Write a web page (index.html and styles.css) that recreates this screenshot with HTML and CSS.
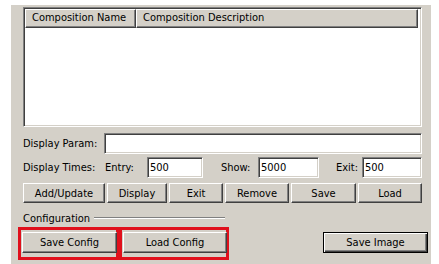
FILE: index.html
```html
<!DOCTYPE html>
<html lang="en">
<head>
    <meta charset="UTF-8">
    <title>Composition Editor</title>
    <link rel="stylesheet" href="styles.css">
</head>
<body>
    <div class="panel">
        <div class="list-view">
            <div class="list-head">
                <div class="head-cell col-name">Composition Name</div>
                <div class="head-cell col-desc">Composition Description</div>
            </div>
            <div class="list-body"></div>
        </div>

        <div class="form-row param-row">
            <span class="row-label param-label">Display Param:</span>
            <input class="field field-wide" type="text" value="">
        </div>

        <div class="form-row times-row">
            <span class="row-label times-label">Display Times:</span>
            <span class="sub-label entry-label">Entry:</span>
            <input class="field field-entry" type="text" value="500">
            <span class="sub-label show-label">Show:</span>
            <input class="field field-show" type="text" value="5000">
            <span class="sub-label exit-label">Exit:</span>
            <input class="field field-exit" type="text" value="500">
        </div>

        <div class="form-row button-row">
            <button class="win-button btn-add">Add/Update</button>
            <button class="win-button btn-display">Display</button>
            <button class="win-button btn-exit">Exit</button>
            <button class="win-button btn-remove">Remove</button>
            <button class="win-button btn-save">Save</button>
            <button class="win-button btn-load">Load</button>
        </div>

        <div class="config-group">
            <div class="group-title">
                <span>Configuration</span>
                <span class="group-line"></span>
            </div>
            <div class="config-row">
                <div class="highlight save-mark">
                    <button class="win-button btn-save-config">Save Config</button>
                </div>
                <div class="highlight load-mark">
                    <button class="win-button btn-load-config">Load Config</button>
                </div>
                <button class="win-button default-button btn-save-image">Save Image</button>
            </div>
        </div>
    </div>
</body>
</html>
```

FILE: styles.css
```css
body {
    margin: 0;
    padding: 0;
    background-color: #ffffff;
    font-family: "DejaVu Sans Condensed", "DejaVu Sans", sans-serif;
    font-size: 11px;
    color: #000000;
}
.panel {
    margin: 5px 0 0 11px;
    width: 420px;
    height: 259px;
    box-sizing: border-box;
    padding: 2px 9px 0 12px;
    background-color: #d4d0c8;
}

/* list view */
.list-view {
    height: 120px;
    box-sizing: border-box;
    border: 1px solid;
    border-color: #808080 #ffffff #ffffff #808080;
    box-shadow: inset 1px 1px #404040, inset -1px -1px #d4d0c8;
    background-color: #ffffff;
    padding: 1px;
    display: flex;
    flex-direction: column;
}
.list-head {
    display: flex;
    height: 19px;
    margin-right: 2px;
}
.head-cell {
    box-sizing: border-box;
    height: 19px;
    line-height: 16px;
    padding-left: 6px;
    background-color: #d4d0c8;
    border: 1px solid;
    border-color: #ffffff #404040 #404040 #ffffff;
    box-shadow: inset -1px -1px #808080;
    white-space: nowrap;
}
.col-name {
    width: 111px;
}
.col-desc {
    flex: 1;
}
.list-body {
    flex: 1;
}

/* form rows */
.form-row {
    display: flex;
    align-items: center;
}
.param-row {
    margin-top: 6px;
}
.times-row {
    margin-top: 3px;
}
.button-row {
    margin-top: 5px;
    gap: 2px;
}
.row-label {
    white-space: nowrap;
}
.param-label {
    width: 81px;
}
.times-label {
    width: 82px;
}
.sub-label {
    box-sizing: border-box;
    white-space: nowrap;
}
.entry-label {
    width: 42px;
}
.show-label {
    width: 55px;
    padding-left: 18px;
}
.exit-label {
    width: 43px;
    padding-left: 17px;
}
.field {
    box-sizing: border-box;
    height: 21px;
    margin: 0;
    padding: 0 2px;
    font: inherit;
    color: #000000;
    background-color: #ffffff;
    border: 1px solid;
    border-color: #808080 #ffffff #ffffff #808080;
    box-shadow: inset 1px 1px #404040, inset -1px -1px #d4d0c8;
    outline: none;
}
.field-wide {
    flex: 1;
    min-width: 0;
}
.field-entry {
    width: 56px;
}
.field-show {
    width: 61px;
}
.field-exit {
    flex: 1;
    min-width: 0;
}

/* buttons */
.win-button {
    box-sizing: border-box;
    height: 20px;
    margin: 0;
    padding: 0;
    font: inherit;
    color: #000000;
    background-color: #d4d0c8;
    border: 1px solid;
    border-color: #ffffff #404040 #404040 #ffffff;
    box-shadow: inset -1px -1px #808080;
    flex: none;
}
.btn-add { width: 82px; }
.btn-display { width: 60px; }
.btn-exit { width: 54px; }
.btn-remove { width: 64px; }
.btn-save { width: 65px; }
.btn-load { width: 64px; }

/* configuration group */
.config-group {
    margin-top: 8px;
}
.group-title {
    display: flex;
    align-items: center;
    height: 14px;
}
.group-line {
    width: 131px;
    margin-left: 4px;
    border-top: 1px solid #808080;
    border-bottom: 1px solid #ffffff;
}
.config-row {
    display: flex;
    align-items: flex-start;
    margin-left: -5px;
    margin-top: 2px;
}
.highlight {
    box-sizing: border-box;
    height: 33px;
    border: 3px solid #e0101c;
    padding: 2px 0 0 1px;
}
.save-mark {
    width: 101px;
}
.load-mark {
    width: 110px;
}
.btn-save-config {
    width: 95px;
    height: 21px;
}
.btn-load-config {
    width: 104px;
    height: 21px;
}
.btn-save-image {
    width: 105px;
    height: 21px;
    margin: 5px -6px 0 auto;
    border: 1px solid #000000;
    box-shadow: inset 1px 1px #ffffff, inset -1px -1px #404040, inset -2px -2px #808080;
}
```
